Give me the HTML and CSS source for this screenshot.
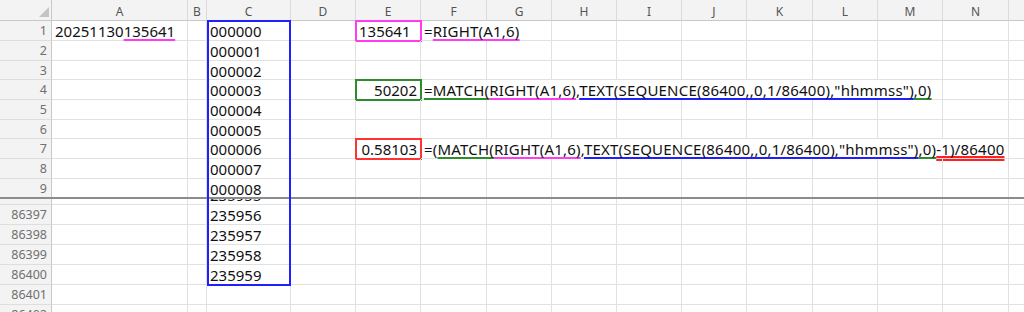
FILE: index.html
```html
<!DOCTYPE html>
<html lang="en">
<head>
    <meta charset="UTF-8">
    <title>RIGHT / MATCH / SEQUENCE</title>
    <link rel="stylesheet" href="styles.css">
</head>
<body>
<div class="sheet">
    <!-- column headers -->
    <div class="row head">
        <div class="ch corner">
            <svg width="52" height="20" viewBox="0 0 52 20"><polygon points="49,7 49,17 39,17" fill="#c4c4c4"/></svg>
        </div>
        <div class="ch">A</div><div class="ch">B</div><div class="ch">C</div><div class="ch">D</div>
        <div class="ch">E</div><div class="ch">F</div><div class="ch">G</div><div class="ch">H</div>
        <div class="ch">I</div><div class="ch">J</div><div class="ch">K</div><div class="ch">L</div>
        <div class="ch">M</div><div class="ch">N</div><div class="ch"></div>
    </div>

    <div class="row h20">
        <div class="rh">1</div>
        <div class="c">20251130<span class="ul pink">135641</span></div>
        <div class="c"></div>
        <div class="c">000000</div>
        <div class="c"></div>
        <div class="c box-pink">135641</div>
        <div class="c span2 formula">=<span class="ul pink">RIGHT(A1,6)</span></div>
        <div class="c"></div><div class="c"></div><div class="c"></div><div class="c"></div>
        <div class="c"></div><div class="c"></div><div class="c"></div><div class="c"></div>
    </div>

    <div class="row h20">
        <div class="rh">2</div>
        <div class="c"></div><div class="c"></div>
        <div class="c">000001</div>
        <div class="c"></div><div class="c"></div><div class="c"></div><div class="c"></div>
        <div class="c"></div><div class="c"></div><div class="c"></div><div class="c"></div>
        <div class="c"></div><div class="c"></div><div class="c"></div><div class="c"></div>
    </div>

    <div class="row h19">
        <div class="rh">3</div>
        <div class="c"></div><div class="c"></div>
        <div class="c">000002</div>
        <div class="c"></div><div class="c"></div><div class="c"></div><div class="c"></div>
        <div class="c"></div><div class="c"></div><div class="c"></div><div class="c"></div>
        <div class="c"></div><div class="c"></div><div class="c"></div><div class="c"></div>
    </div>

    <div class="row h20">
        <div class="rh">4</div>
        <div class="c"></div><div class="c"></div>
        <div class="c">000003</div>
        <div class="c"></div>
        <div class="c num box-green">50202</div>
        <div class="c span8 formula"><span class="ul green">=MATCH(</span><span class="ul pink">RIGHT(A1,6)</span>,<span class="ul blue">TEXT(SEQUENCE(86400,,0,1/86400),"hhmmss")</span><span class="ul green">,0)</span></div>
        <div class="c"></div><div class="c"></div>
    </div>

    <div class="row h20">
        <div class="rh">5</div>
        <div class="c"></div><div class="c"></div>
        <div class="c">000004</div>
        <div class="c"></div><div class="c"></div><div class="c"></div><div class="c"></div>
        <div class="c"></div><div class="c"></div><div class="c"></div><div class="c"></div>
        <div class="c"></div><div class="c"></div><div class="c"></div><div class="c"></div>
    </div>

    <div class="row h19">
        <div class="rh">6</div>
        <div class="c"></div><div class="c"></div>
        <div class="c">000005</div>
        <div class="c"></div><div class="c"></div><div class="c"></div><div class="c"></div>
        <div class="c"></div><div class="c"></div><div class="c"></div><div class="c"></div>
        <div class="c"></div><div class="c"></div><div class="c"></div><div class="c"></div>
    </div>

    <div class="row h20">
        <div class="rh">7</div>
        <div class="c"></div><div class="c"></div>
        <div class="c">000006</div>
        <div class="c"></div>
        <div class="c num box-red">0.58103</div>
        <div class="c span9 formula">=(<span class="ul green">MATCH(</span><span class="ul pink">RIGHT(A1,6)</span>,<span class="ul blue">TEXT(SEQUENCE(86400,,0,1/86400),"hhmmss")</span><span class="ul green">,0)</span><span class="ul red">-1)/86400</span></div>
        <div class="c"></div>
    </div>

    <div class="row h20">
        <div class="rh">8</div>
        <div class="c"></div><div class="c"></div>
        <div class="c">000007</div>
        <div class="c"></div><div class="c"></div><div class="c"></div><div class="c"></div>
        <div class="c"></div><div class="c"></div><div class="c"></div><div class="c"></div>
        <div class="c"></div><div class="c"></div><div class="c"></div><div class="c"></div>
    </div>

    <div class="row h19">
        <div class="rh">9</div>
        <div class="c"></div><div class="c"></div>
        <div class="c">000008</div>
        <div class="c"></div><div class="c"></div><div class="c"></div><div class="c"></div>
        <div class="c"></div><div class="c"></div><div class="c"></div><div class="c"></div>
        <div class="c"></div><div class="c"></div><div class="c"></div><div class="c"></div>
    </div>

    <!-- frozen panes split -->
    <div class="freeze"></div>

    <div class="pane">
        <div class="row h20 partial">
            <div class="rh">86396</div>
            <div class="c"></div><div class="c"></div>
            <div class="c">235955</div>
            <div class="c"></div><div class="c"></div><div class="c"></div><div class="c"></div>
            <div class="c"></div><div class="c"></div><div class="c"></div><div class="c"></div>
            <div class="c"></div><div class="c"></div><div class="c"></div><div class="c"></div>
        </div>
        <div class="row h20">
            <div class="rh">86397</div>
            <div class="c"></div><div class="c"></div>
            <div class="c">235956</div>
            <div class="c"></div><div class="c"></div><div class="c"></div><div class="c"></div>
            <div class="c"></div><div class="c"></div><div class="c"></div><div class="c"></div>
            <div class="c"></div><div class="c"></div><div class="c"></div><div class="c"></div>
        </div>
        <div class="row h20">
            <div class="rh">86398</div>
            <div class="c"></div><div class="c"></div>
            <div class="c">235957</div>
            <div class="c"></div><div class="c"></div><div class="c"></div><div class="c"></div>
            <div class="c"></div><div class="c"></div><div class="c"></div><div class="c"></div>
            <div class="c"></div><div class="c"></div><div class="c"></div><div class="c"></div>
        </div>
        <div class="row h20">
            <div class="rh">86399</div>
            <div class="c"></div><div class="c"></div>
            <div class="c">235958</div>
            <div class="c"></div><div class="c"></div><div class="c"></div><div class="c"></div>
            <div class="c"></div><div class="c"></div><div class="c"></div><div class="c"></div>
            <div class="c"></div><div class="c"></div><div class="c"></div><div class="c"></div>
        </div>
        <div class="row h20">
            <div class="rh">86400</div>
            <div class="c"></div><div class="c"></div>
            <div class="c">235959</div>
            <div class="c"></div><div class="c"></div><div class="c"></div><div class="c"></div>
            <div class="c"></div><div class="c"></div><div class="c"></div><div class="c"></div>
            <div class="c"></div><div class="c"></div><div class="c"></div><div class="c"></div>
        </div>
        <div class="row h20">
            <div class="rh">86401</div>
            <div class="c"></div><div class="c"></div><div class="c"></div><div class="c"></div>
            <div class="c"></div><div class="c"></div><div class="c"></div><div class="c"></div>
            <div class="c"></div><div class="c"></div><div class="c"></div><div class="c"></div>
            <div class="c"></div><div class="c"></div><div class="c"></div>
        </div>
        <div class="row h20">
            <div class="rh">86402</div>
            <div class="c"></div><div class="c"></div><div class="c"></div><div class="c"></div>
            <div class="c"></div><div class="c"></div><div class="c"></div><div class="c"></div>
            <div class="c"></div><div class="c"></div><div class="c"></div><div class="c"></div>
            <div class="c"></div><div class="c"></div><div class="c"></div>
        </div>
    </div>

    <!-- blue frame around column C -->
    <div class="frame-blue"></div>
</div>
</body>
</html>
```

FILE: styles.css
```css
body {
    margin: 0;
    overflow: hidden;
    background: #fff;
    font-family: "Noto Sans", "Liberation Sans", sans-serif;
    color: #111;
}
.sheet {
    position: relative;
    width: 1024px;
    height: 312px;
    overflow: hidden;
}
.row {
    display: grid;
    grid-template-columns: 52px 136px 19px 84px 65px 65px 66px 65px 65px 65px 65px 66px 65px 65px 66px 65px;
}
.row > div {
    box-sizing: border-box;
    white-space: nowrap;
}
.head { height: 21px; }
.h20 { height: 20px; }
.h19 { height: 19px; }

/* headers */
.ch {
    background: #f3f3f3;
    border-right: 1px solid #dadada;
    border-bottom: 1px solid #c8c8c8;
    text-align: center;
    font-size: 12px;
    line-height: 12px;
    padding-top: 6px;
    color: #555;
}
.corner {
    padding: 0;
    border-right-color: #c8c8c8;
}
.corner svg { display: block; }
.rh {
    background: #f3f3f3;
    border-right: 1px solid #c8c8c8;
    border-bottom: 1px solid #dedede;
    text-align: right;
    padding: 4px 4px 0 0;
    font-size: 12.5px;
    line-height: 12px;
    color: #707070;
}

/* cells */
.c {
    border-right: 1px solid #e1e1e1;
    border-bottom: 1px solid #e1e1e1;
    padding: 3px 3px 0;
    font-size: 15px;
    line-height: 15px;
}
.num { text-align: right; }
.formula { letter-spacing: 0.2px; }
.span2 { grid-column: span 2; }
.span8 { grid-column: span 8; }
.span9 { grid-column: span 9; }

.box-pink { outline: 2px solid #ff3cf0; outline-offset: -1px; }
.box-green { outline: 2px solid #2e8b2e; outline-offset: -1px; }
.box-red { outline: 2px solid #ff3333; outline-offset: -1px; }

/* hand drawn underlines */
.ul {
    text-decoration-line: underline;
    text-decoration-thickness: 2px;
    text-underline-offset: 2px;
    text-decoration-skip-ink: none;
}
.pink { text-decoration-color: #ff3cf0; }
.green { text-decoration-color: #2e8b2e; }
.blue { text-decoration-color: #2020ff; }
.red {
    text-decoration-color: #ff2020;
    text-decoration-style: double;
    text-decoration-thickness: 1.5px;
    text-underline-offset: 1px;
}

/* split */
.freeze {
    position: relative;
    height: 2px;
    margin-top: -1px;
    background: #8c8c8c;
}
.pane {
    height: 114px;
    overflow: hidden;
}
.partial { margin-top: -14px; }

.frame-blue {
    position: absolute;
    left: 207px;
    top: 20px;
    width: 84px;
    height: 266px;
    border: 2px solid #2020ff;
    box-sizing: border-box;
}
```
